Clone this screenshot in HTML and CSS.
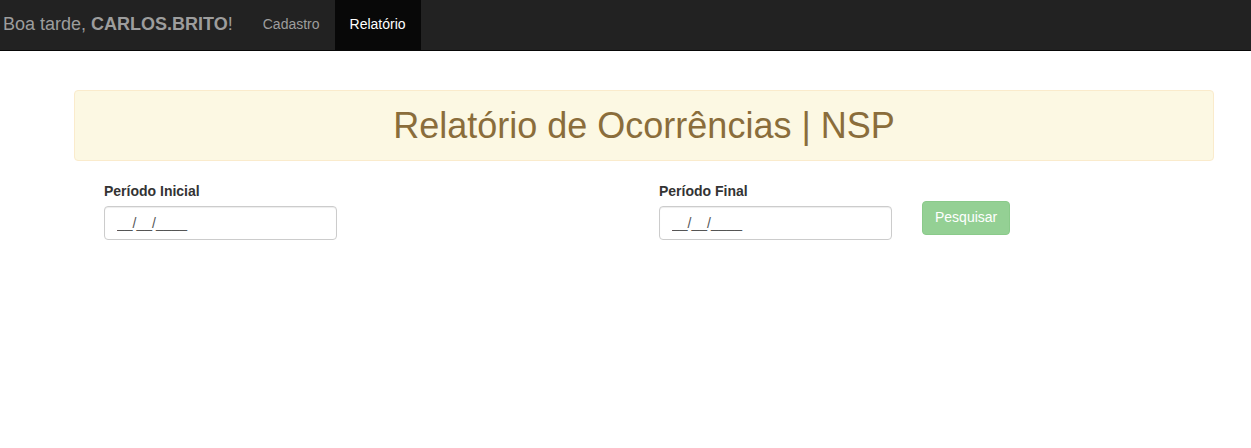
FILE: index.html
```html
<!DOCTYPE html>
<html lang="pt-BR">
<head>
<meta charset="utf-8">
<title>Relatório</title>
<link rel="stylesheet" href="styles.css">
</head>
<body>
<nav class="navbar">
  <div class="brand"><span>Boa tarde, <b>CARLOS.BRITO</b>!</span></div>
  <ul class="nav">
    <li><a href="#">Cadastro</a></li>
    <li class="active"><a href="#">Relatório</a></li>
  </ul>
</nav>
<main class="container">
  <div class="alert">
    <h1 class="title">Relatório de Ocorrências | NSP</h1>
  </div>
  <form class="filters">
    <div class="field">
      <label>Período Inicial</label>
      <input class="input" type="text" value="__/__/____">
    </div>
    <div class="field field-end">
      <label>Período Final</label>
      <input class="input" type="text" value="__/__/____">
    </div>
    <button class="btn" type="button">Pesquisar</button>
  </form>
</main>
</body>
</html>
```
FILE: styles.css
```css
* { box-sizing: border-box; }
html, body { margin: 0; padding: 0; }
body {
  font-family: "Liberation Sans", Arial, Helvetica, sans-serif;
  font-size: 14px;
  line-height: 1.42857;
  color: #333;
  background: #fff;
}
.navbar {
  display: flex;
  align-items: stretch;
  height: 51px;
  background: #222;
  border-bottom: 1px solid #080808;
}
.brand {
  display: flex;
  align-items: center;
  padding: 0 15px 0 3px;
  font-size: 18px;
  color: #9d9d9d;
}
.brand b { font-weight: 700; }
.nav {
  display: flex;
  list-style: none;
  margin: 0;
  padding: 0;
}
.nav li a {
  display: flex;
  align-items: center;
  height: 50px;
  padding: 0 15px;
  color: #9d9d9d;
  text-decoration: none;
}
.nav li.active a {
  background: #080808;
  color: #fff;
}
.container {
  padding: 39px 37px 0 74px;
}
.alert {
  background: #fcf8e3;
  border: 1px solid #faebcc;
  border-radius: 4px;
  height: 71px;
  display: flex;
  align-items: center;
  justify-content: center;
}
.title {
  margin: 0;
  font-size: 36px;
  font-weight: 400;
  color: #8a6d3b;
  line-height: 1.1;
}
.filters {
  display: flex;
  align-items: flex-start;
  padding: 20px 0 0 30px;
}
.field {
  display: flex;
  flex-direction: column;
  width: 233px;
}
.field-end { margin-left: 322px; }
.field label {
  font-weight: 700;
  font-size: 14px;
  margin-bottom: 5px;
  line-height: 20px;
}
.input {
  height: 34px;
  padding: 6px 12px;
  font: inherit;
  font-size: 14px;
  color: #555;
  border: 1px solid #ccc;
  border-radius: 4px;
  box-shadow: inset 0 1px 1px rgba(0,0,0,.075);
}
.btn {
  margin: 20px 0 0 30px;
  height: 34px;
  padding: 6px 12px;
  font: inherit;
  font-size: 14px;
  color: #fff;
  background: #5cb85c;
  border: 1px solid #4cae4c;
  border-radius: 4px;
  opacity: .65;
}
```
